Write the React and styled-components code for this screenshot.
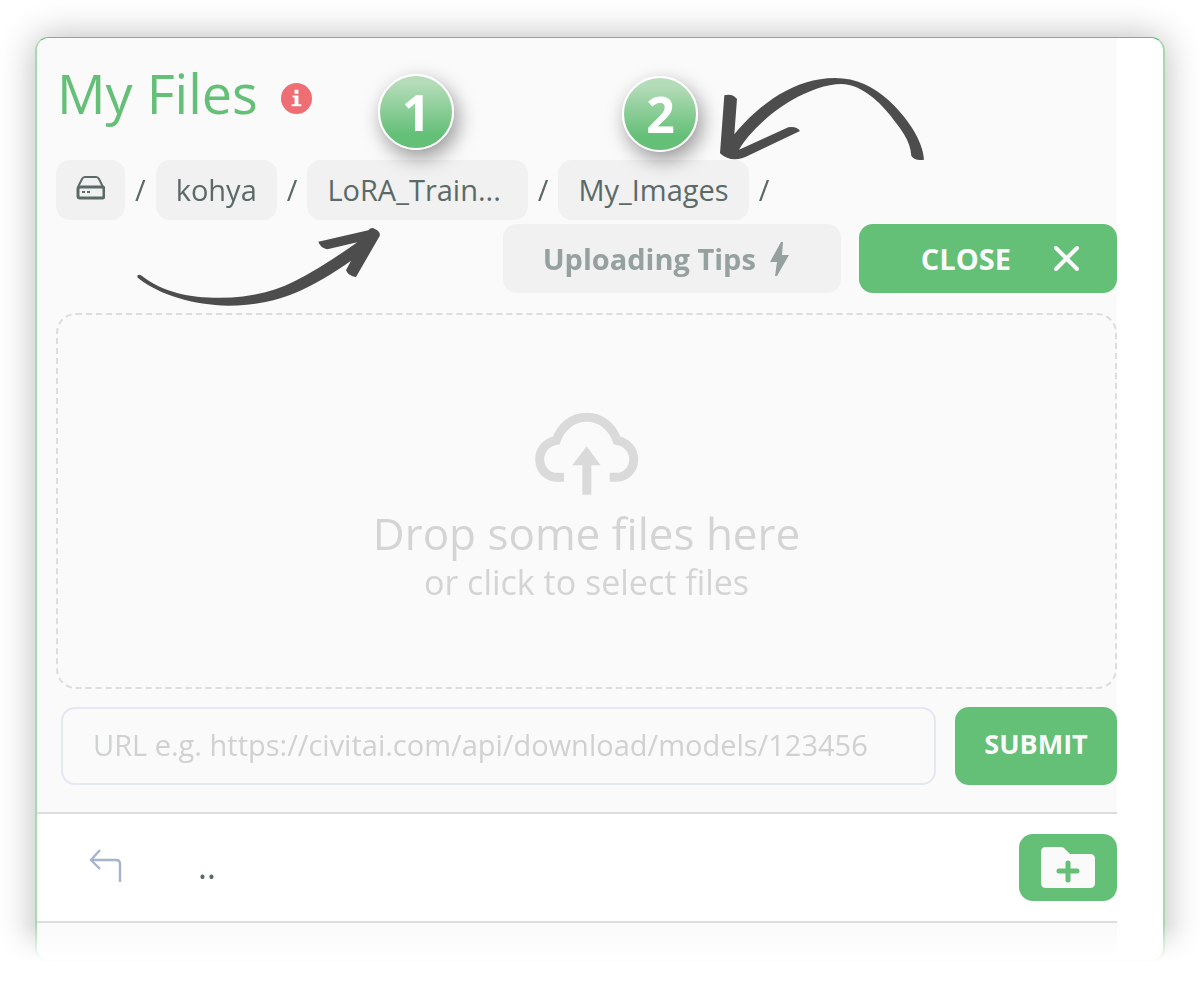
import { useState } from 'react';
import styled, { createGlobalStyle } from 'styled-components';

const GlobalStyle = createGlobalStyle`
    :root {
        --primary: #64bf77;
        --outline: #a7d9b1;
        --surface: #fafafa;
        --muted: #f1f1f1;
        --line: #dddddd;
        --text: #5b6a67;
        --ink: #4d4d4d;
    }

    * {
        box-sizing: border-box;
    }

    body {
        margin: 0;
        background: #fff;
        color: var(--text);
        font-family: 'Open Sans', sans-serif;
    }

    button,
    input {
        font-family: inherit;
    }
`;

const Page = styled.div`
    padding: 37px 35px 0;
    mask-image: linear-gradient(to top, transparent 0, #000 38px);
`;

const Panel = styled.main`
    border: 2px solid var(--outline);
    border-top: 1px solid var(--primary);
    border-radius: 14px;
    padding-right: 46px;
    background: #fff;
    box-shadow: 0 0 36px rgba(0, 0, 0, 0.28);
`;

const Manager = styled.section`
    background: var(--surface);
    border-radius: 12px 0 0 12px;
    overflow: hidden;
`;

const Header = styled.header`
    display: flex;
    align-items: center;
    gap: 23px;
    padding: 18px 0 0 20px;
`;

const Title = styled.h1`
    margin: 0;
    font-size: 54px;
    line-height: 74px;
    font-weight: 400;
    color: var(--primary);
`;

const InfoButton = styled.button`
    display: flex;
    margin-top: 10px;
    padding: 0;
    border: 0;
    background: none;
    cursor: pointer;
`;

const Breadcrumbs = styled.nav`
    display: flex;
    flex-wrap: wrap;
    align-items: center;
    gap: 10px;
    margin-top: 30px;
    padding-left: 19px;
    font-size: 29px;
    line-height: 60px;
`;

const CrumbItem = styled.div`
    position: relative;
`;

const Crumb = styled.a`
    display: flex;
    align-items: center;
    height: 60px;
    padding: 0 ${({ $truncated }) => ($truncated ? 27 : 20)}px 0 20px;
    border-radius: 14px;
    background: var(--muted);
    color: inherit;
    text-decoration: none;
`;

const StepBadge = styled.span`
    position: absolute;
    z-index: 2;
    top: ${({ $top }) => $top}px;
    left: ${({ $left }) => $left}px;
    width: 76px;
    height: 76px;
    border: 2px solid #fff;
    border-radius: 50%;
    background: linear-gradient(#b5dcb9 12%, var(--primary) 80%);
    background-origin: border-box;
    box-shadow: 4px 8px 20px rgba(0, 0, 0, 0.4);
    color: #fff;
    font-size: 50px;
    font-weight: 700;
    line-height: 72px;
    text-align: center;
`;

const ArrowDrawing = styled.svg`
    position: absolute;
    z-index: 1;
    top: ${({ $top }) => $top}px;
    left: ${({ $left }) => $left}px;
    fill: var(--ink);
    pointer-events: none;
`;

const Actions = styled.div`
    display: flex;
    justify-content: flex-end;
    gap: 18px;
    margin-top: 4px;
`;

const Button = styled.button`
    display: flex;
    align-items: center;
    justify-content: center;
    border: 0;
    border-radius: 14px;
    background: var(--primary);
    color: #fafafa;
    font-size: 29px;
    font-weight: 700;
    cursor: pointer;
`;

const TipsButton = styled(Button)`
    gap: 14px;
    height: 69px;
    padding: 0 52px 0 40px;
    background: var(--muted);
    color: #94a19e;
`;

const CloseButton = styled(Button)`
    gap: 43px;
    height: 69px;
    padding: 0 38px 0 62px;
`;

const DropZone = styled.label`
    display: flex;
    flex-direction: column;
    align-items: center;
    margin: 20px 0 0 19px;
    padding: 97px 0 83px;
    border: 2px dashed var(--line);
    border-radius: 20px;
    color: #d4d4d4;
    cursor: pointer;

    input {
        display: none;
    }
`;

const DropTitle = styled.span`
    margin-top: 10px;
    font-size: 44px;
    line-height: 54px;
`;

const DropHint = styled.span`
    font-size: 34px;
    line-height: 44px;
`;

const UrlForm = styled.form`
    display: flex;
    gap: 19px;
    margin: 18px 0 0 24px;
`;

const UrlInput = styled.input`
    flex: 1;
    min-width: 0;
    height: 78px;
    padding: 0 30px 4px;
    border: 2px solid #e4e8f1;
    border-radius: 14px;
    background: transparent;
    color: var(--text);
    font-size: 29px;

    &::placeholder {
        color: #cfd2d1;
        opacity: 1;
    }
`;

const SubmitButton = styled(Button)`
    width: 162px;
    height: 78px;
    padding-bottom: 6px;
    font-size: 27px;
`;

const FileRow = styled.div`
    display: flex;
    align-items: center;
    margin-top: 27px;
    padding: 20px 0;
    border: solid var(--line);
    border-width: 2px 0;
    background: #fff;
`;

const ParentLink = styled.a`
    display: flex;
    flex: 1;
    align-items: center;
    gap: 76px;
    padding: 0 0 4px 52px;
    color: var(--text);
    font-size: 34px;
    line-height: 40px;
    text-decoration: none;
`;

const NewFolderButton = styled(Button)`
    width: 98px;
    height: 67px;
`;

const Remainder = styled.div`
    height: 37px;
`;

const DriveIcon = () => (
    <svg width="29" height="32" viewBox="0 0 29 32" fill="none" stroke="currentColor" strokeWidth="2">
        <path d="M2 13 6 5Q7 3 9 3H20Q22 3 23 5L27 13" />
        <rect x="2" y="13" width="26" height="11" rx="2" strokeWidth="3" />
        <path d="M6 18h3M11 18h3" />
    </svg>
);

const InfoIcon = () => (
    <svg width="31" height="31" viewBox="0 0 32 32">
        <circle cx="16" cy="16" r="16" fill="#ee6e73" />
        <path fill="#fff" d="M14 7h4v4h-4zM12 13h6v9h3v2H11v-2h3v-7h-2z" />
    </svg>
);

const BoltIcon = () => (
    <svg width="19" height="36" viewBox="0 0 19 36" fill="currentColor">
        <path d="M11 1 0 21h7L5 35h2L19 14h-7L13 1z" />
    </svg>
);

const CloseIcon = () => (
    <svg width="25" height="25" viewBox="0 0 25 25" stroke="currentColor" strokeWidth="4" strokeLinecap="round">
        <path d="M2 2 23 23M23 2 2 23" />
    </svg>
);

const CloudIcon = () => (
    <svg width="104" height="84" viewBox="104 66 312 252" fill="none">
        <path
            d="M191 262H172C140 262 118 238 118 208C118 178 140 156 168 151C181 111 216 82 259 82C302 82 337 111 350 151C378 156 400 178 400 208C400 238 378 262 346 262H328"
            stroke="#dadada"
            strokeWidth="27"
        />
        <path fill="#dadada" d="M259 169 301 226H273V314H246V226H216z" />
    </svg>
);

const BackIcon = () => (
    <svg width="33" height="34" viewBox="0 0 33 34" fill="none" stroke="#a5b4ca" strokeWidth="2.4">
        <path d="M11 1 2 11 11 20M2 11H27Q31 11 31 15V33" />
    </svg>
);

const FolderPlusIcon = () => (
    <svg width="54" height="42" viewBox="0 0 54 42">
        <path fill="#fafafa" d="M5 0H20Q23 0 25 3L29 7H49Q54 7 54 12V36Q54 41 49 41H5Q0 41 0 36V5Q0 0 5 0z" />
        <path stroke="#64bf77" strokeWidth="5" strokeLinecap="round" d="M27 16V33M18 24H36" />
    </svg>
);

const LeftArrow = () => (
    <ArrowDrawing $top={50} $left={-187} width="280" height="110" viewBox="0 0 840 330" aria-hidden="true">
        <path d="M52 197Q56 192 65 197C130 247 205 263 300 263C395 263 475 243 555 197C610 167 660 134 712 97L622 118Q600 112 595 95L745 61Q754 50 765 57Q783 66 779 78L708 201Q685 198 678 181L693 152C640 190 580 225 525 249C470 273 400 287 325 287C220 285 120 255 58 207Q50 202 52 197z" />
    </ArrowDrawing>
);

const RightArrow = () => (
    <ArrowDrawing $top={-100} $left={142} width="260" height="120" viewBox="0 0 780 360" aria-hidden="true">
        <path d="M73 106Q97 99 111 117L103 223C180 130 285 54 405 54C470 54 520 80 565 120C615 165 670 240 672 299Q645 304 634 288C632 240 600 205 570 165C530 115 475 72 425 72C380 72 325 92 275 121C215 155 150 215 117 269L265 202Q290 198 300 213L147 286C115 303 85 303 60 280z" />
    </ArrowDrawing>
);

const App = () => {
    const [url, setUrl] = useState('');

    return (
        <>
            <GlobalStyle />
            <Page>
                <Panel>
                    <Manager>
                        <Header>
                            <Title>My Files</Title>
                            <InfoButton type="button" aria-label="About my files">
                                <InfoIcon />
                            </InfoButton>
                        </Header>

                        <Breadcrumbs aria-label="Folder path">
                            <Crumb href="#root" aria-label="Drive">
                                <DriveIcon />
                            </Crumb>
                            <span>/</span>
                            <Crumb href="#kohya">kohya</Crumb>
                            <span>/</span>
                            <CrumbItem>
                                <Crumb href="#lora" $truncated>
                                    LoRA_Train...
                                </Crumb>
                                <StepBadge $top={-86} $left={71}>1</StepBadge>
                                <LeftArrow />
                            </CrumbItem>
                            <span>/</span>
                            <CrumbItem>
                                <Crumb href="#images">My_Images</Crumb>
                                <StepBadge $top={-84} $left={64}>2</StepBadge>
                                <RightArrow />
                            </CrumbItem>
                            <span>/</span>
                        </Breadcrumbs>

                        <Actions>
                            <TipsButton type="button">
                                Uploading Tips
                                <BoltIcon />
                            </TipsButton>
                            <CloseButton type="button">
                                CLOSE
                                <CloseIcon />
                            </CloseButton>
                        </Actions>

                        <DropZone>
                            <input type="file" multiple />
                            <CloudIcon />
                            <DropTitle>Drop some files here</DropTitle>
                            <DropHint>or click to select files</DropHint>
                        </DropZone>

                        <UrlForm onSubmit={(e) => e.preventDefault()}>
                            <UrlInput
                                type="text"
                                aria-label="File URL"
                                placeholder="URL e.g. https://civitai.com/api/download/models/123456"
                                value={url}
                                onChange={(e) => setUrl(e.target.value)}
                            />
                            <SubmitButton type="submit">SUBMIT</SubmitButton>
                        </UrlForm>

                        <FileRow>
                            <ParentLink href="#parent">
                                <BackIcon />
                                <span>..</span>
                            </ParentLink>
                            <NewFolderButton type="button" aria-label="New folder">
                                <FolderPlusIcon />
                            </NewFolderButton>
                        </FileRow>
                        <Remainder />
                    </Manager>
                </Panel>
            </Page>
        </>
    );
};

export default App;
